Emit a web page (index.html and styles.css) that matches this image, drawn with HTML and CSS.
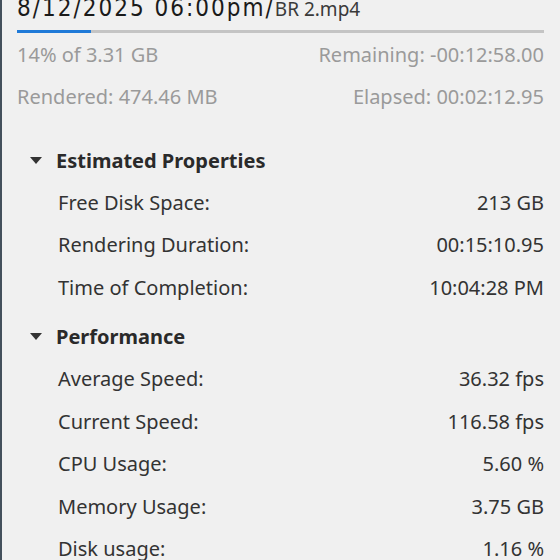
FILE: index.html
```html
<!DOCTYPE html>
<html>
<head>
<meta charset="utf-8">
<link rel="stylesheet" href="styles.css">
</head>
<body>
<div class="panel">
  <div class="title"><span class="stamp">8/12/2025 06:00pm/</span><span class="file">BR 2.mp4</span></div>
  <div class="progress"><div class="fill" style="width:14%"></div></div>
  <div class="stat"><span>14% of 3.31 GB</span><span>Remaining: -00:12:58.00</span></div>
  <div class="stat"><span>Rendered: 474.46 MB</span><span>Elapsed: 00:02:12.95</span></div>

  <div class="section">
    <div class="head"><span class="tri"></span>Estimated Properties</div>
    <div class="row"><span>Free Disk Space:</span><span>213 GB</span></div>
    <div class="row"><span>Rendering Duration:</span><span>00:15:10.95</span></div>
    <div class="row"><span>Time of Completion:</span><span>10:04:28 PM</span></div>
  </div>

  <div class="section perf">
    <div class="head"><span class="tri"></span>Performance</div>
    <div class="row"><span>Average Speed:</span><span>36.32 fps</span></div>
    <div class="row"><span>Current Speed:</span><span>116.58 fps</span></div>
    <div class="row"><span>CPU Usage:</span><span>5.60 %</span></div>
    <div class="row"><span>Memory Usage:</span><span>3.75 GB</span></div>
    <div class="row"><span>Disk usage:</span><span>1.16 %</span></div>
  </div>
</div>
</body>
</html>
```
FILE: styles.css
```css
html, body {
  margin: 0;
  padding: 0;
  height: 100%;
  overflow: hidden;
}
body {
  background: #f0f0f0;
  font-family: "Noto Sans", "Open Sans", sans-serif;
  font-size: 20px;
  color: #2b2b2b;
}
.panel {
  border-left: 2px solid #44505c;
  min-height: 100%;
  padding: 0 16px 0 15px;
  box-sizing: border-box;
}
.title {
  height: 26px;
  line-height: 26px;
  margin-top: -5px;
  white-space: nowrap;
}
.stamp {
  font-family: "DejaVu Sans Condensed", "DejaVu Sans", sans-serif;
  font-size: 24px;
  letter-spacing: 2px;
  color: #1a1a1a;
  font-stretch: condensed;
}
.file {
  font-size: 19px;
  color: #3a3a3a;
}
.progress {
  margin-top: 9px;
  height: 3px;
  background: #c4c4c4;
}
.fill {
  height: 100%;
  background: #1f7ad8;
}
.stat {
  display: flex;
  justify-content: space-between;
  height: 42px;
  align-items: center;
  color: #9a9a9a;
}
.stat:first-of-type { margin-top: 2px; }
.section {
  margin-top: 22px;
}
.section.perf {
  margin-top: 7px;
}
.head {
  display: flex;
  align-items: center;
  height: 42px;
  font-weight: 700;
  color: #2a2a2a;
}
.tri {
  width: 0;
  height: 0;
  border-left: 6.5px solid transparent;
  border-right: 6.5px solid transparent;
  border-top: 7px solid #333;
  margin: 0 14px 0 13px;
}
.row {
  display: flex;
  justify-content: space-between;
  align-items: center;
  height: 42.5px;
  padding-left: 41px;
  color: #333;
}
```
